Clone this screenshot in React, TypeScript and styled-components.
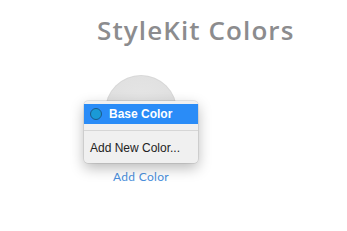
import styled, { createGlobalStyle } from 'styled-components';

const GlobalStyle = createGlobalStyle`
  html, body {
    margin: 0;
    padding: 0;
    background: #ffffff;
  }
  body {
    font-family: Lato, "Liberation Sans", sans-serif;
  }
`;

const Page = styled.div`
  width: 347px;
  height: 231px;
  display: flex;
  flex-direction: column;
  box-sizing: border-box;
  padding: 14px 0 0 97px;
`;

const Title = styled.h1`
  margin: 0;
  font-family: "Open Sans", "Liberation Sans", sans-serif;
  font-weight: 600;
  font-size: 26px;
  letter-spacing: 1.1px;
  line-height: 32px;
  color: #8c8c8e;
  white-space: nowrap;
`;

const Grid = styled.div`
  display: flex;
  margin: 29px 0 0 8px;
`;

const Swatch = styled.div`
  position: relative;
  display: flex;
  flex-direction: column;
  align-items: center;
  width: 72px;
`;

const Circle = styled.div`
  width: 72px;
  height: 72px;
  border-radius: 50%;
  background: radial-gradient(circle at 50% 40%, #e6e6e6 0%, #dcdcdc 100%);
  box-shadow: inset 0 0 0 1px rgba(0, 0, 0, 0.04);
`;

const Label = styled.div`
  margin-top: 22px;
  font-size: 12px;
  font-weight: 400;
  color: #4a8fdc;
  letter-spacing: 0.3px;
`;

const Menu = styled.div`
  position: absolute;
  left: -21px;
  top: 26px;
  width: 114px;
  padding: 3px 0 5px;
  background: #f0f0f0;
  border-radius: 4px;
  box-shadow: 0 0 0 0.5px rgba(0, 0, 0, 0.15), 0 5px 14px rgba(0, 0, 0, 0.28);
  font-family: "Liberation Sans", Arial, sans-serif;
  font-size: 12px;
`;

const Item = styled.div<{ $active?: boolean }>`
  display: flex;
  align-items: center;
  gap: 7px;
  height: 20px;
  padding: 0 6px;
  background: ${p => (p.$active ? '#2a8cf7' : 'transparent')};
  color: ${p => (p.$active ? '#ffffff' : '#222222')};
  font-weight: ${p => (p.$active ? 700 : 400)};
`;

const Dot = styled.span`
  width: 10px;
  height: 10px;
  border-radius: 50%;
  background: #1a9ad6;
  border: 1px solid #1b5b8a;
`;

const Separator = styled.div`
  height: 1px;
  margin: 6px 0 7px;
  background: #d6d6d6;
`;

export default function App() {
  return (
    <>
      <GlobalStyle />
      <Page>
        <Title>StyleKit Colors</Title>
        <Grid>
          <Swatch>
            <Circle />
            <Label>Add Color</Label>
            <Menu>
              <Item $active>
                <Dot />
                Base Color
              </Item>
              <Separator />
              <Item>Add New Color...</Item>
            </Menu>
          </Swatch>
        </Grid>
      </Page>
    </>
  );
}
